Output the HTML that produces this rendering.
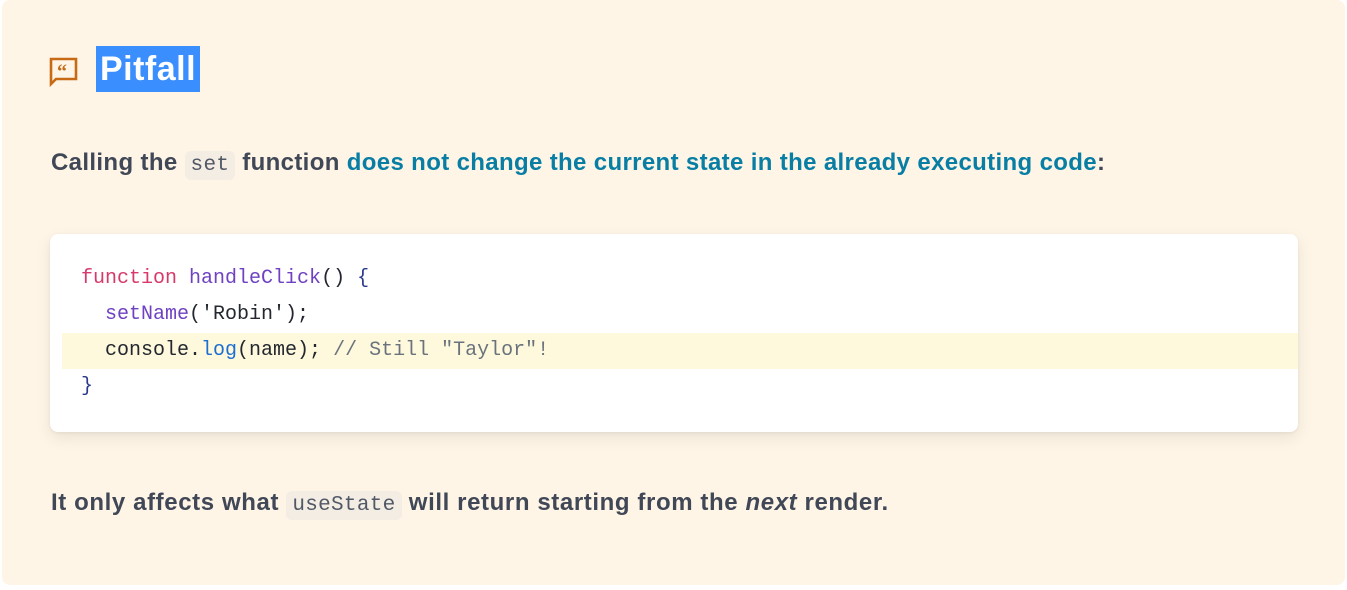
<!DOCTYPE html>
<html><head><style>
body{margin:0;width:1347px;height:590px;background:#fff;font-family:"Liberation Sans",sans-serif;overflow:hidden}
.box{position:absolute;left:2px;top:0;width:1343px;height:585px;background:#fef5e6;border-radius:8px}
.h{position:absolute;left:94px;top:46px;height:46px;width:104px;background:#3a8efd;color:#fff;font-weight:bold;font-size:34px;line-height:46px;text-align:center;letter-spacing:0.5px}
.ic{position:absolute;left:46px;top:57px}
p{position:absolute;left:49px;margin:0;font-size:24px;font-weight:bold;color:#404756;white-space:nowrap;letter-spacing:0.45px}
code{font-family:"Liberation Mono",monospace;font-weight:normal;background:#f4ede4;border-radius:6px;padding:3px 6px;font-size:21px;color:#505866;letter-spacing:0.3px}
.l{color:#087ea4}
.cb{position:absolute;left:48px;top:234px;width:1248px;height:198px;background:#fff;border-radius:8px;box-shadow:0 6px 16px rgba(0,0,0,.08),0 1px 3px rgba(0,0,0,.06)}
.hl{position:absolute;left:12px;top:99px;width:1236px;height:36px;background:#fef9dc}
pre{position:absolute;left:31px;top:27px;margin:0;font-family:"Liberation Mono",monospace;font-size:20px;line-height:36px;color:#23272f}
.k{color:#d73a6a}.f{color:#6f42c1}.c{color:#6a737d}.b{color:#1c6fd1}.p{color:#2a3a8a}
</style></head><body>
<div class="box">
<svg class="ic" width="32" height="30" viewBox="0 0 32 30"><path d="M3 2h25v20H8l-5 5z" fill="none" stroke="#c76a15" stroke-width="2.6" stroke-linejoin="miter"/><text x="9" y="21" font-size="20" font-weight="bold" fill="#c76a15" font-family="Liberation Serif">“</text></svg>
<div class="h">Pitfall</div>
<p style="top:149px;letter-spacing:0.35px">Calling the <code>set</code> function <span class="l">does not</span><span class="l"> change the current state in the already executing code</span>:</p>
<div class="cb"><div class="hl"></div>
<pre><span class="k">function</span> <span class="f">handleClick</span>() <span class="p">{</span>
  <span class="f">setName</span>('Robin');
  console.<span class="b">log</span>(name); <span class="c">// Still "Taylor"!</span>
<span class="p">}</span></pre></div>
<p style="top:489px;letter-spacing:0.6px">It only affects what <code>useState</code> will return starting from the <i>next</i> render.</p>
</div>
</body></html>
